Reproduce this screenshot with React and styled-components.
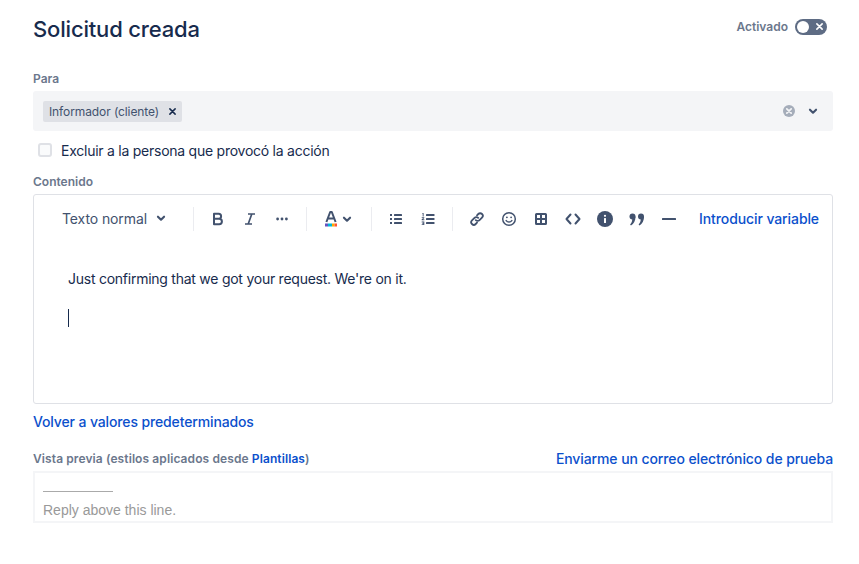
import React from 'react'
import styled, { createGlobalStyle } from 'styled-components'

const Global = createGlobalStyle`
  html, body {
    margin: 0;
    padding: 0;
    background: #fff;
    font-family: Inter, "Noto Sans", sans-serif;
    -webkit-font-smoothing: antialiased;
  }
`
const Page = styled.div`
  width: 800px;
  padding: 14px 26px 0 33px;
  display: flex;
  flex-direction: column;
`
const Header = styled.div`
  display: flex;
  align-items: center;
  justify-content: space-between;
  height: 30px;
  margin-bottom: 27px;
`
const Title = styled.h1`
  margin: 0;
  font-size: 22px;
  line-height: 30px;
  font-weight: 500;
  letter-spacing: -0.17px;
  color: #172b4d;
`
const ToggleWrap = styled.div`
  display: flex;
  align-items: center;
  gap: 7px;
  margin: -5px 6px 0 0;
`
const ToggleLabel = styled.span`
  font-size: 12px;
  font-weight: 600;
  color: #6b778c;
`
const ToggleTrack = styled.div`
  width: 32px;
  height: 16px;
  border-radius: 8px;
  background: #5e6c84;
  display: flex;
  align-items: center;
  justify-content: space-between;
  padding: 0 4px 0 2px;
  box-sizing: border-box;
`
const ToggleKnob = styled.div`
  width: 12px;
  height: 12px;
  border-radius: 50%;
  background: #fff;
`
const Label = styled.div`
  font-size: 12px;
  line-height: 16px;
  font-weight: 600;
  color: #6b778c;
  margin-bottom: ${p => p.$gap || 4}px;
`
const Select = styled.div`
  height: 40px;
  background: #f4f5f7;
  border-radius: 3px;
  display: flex;
  align-items: center;
  padding: 0 13px 0 10px;
`
const Tag = styled.div`
  height: 21px;
  display: flex;
  align-items: center;
  gap: 10px;
  padding: 0 6px;
  background: #dfe1e6;
  border-radius: 2px;
  font-size: 12px;
  letter-spacing: -0.1px;
  color: #42526e;
`
const SelectIcons = styled.div`
  margin-left: auto;
  display: flex;
  align-items: center;
  gap: 10px;
`
const CheckRow = styled.label`
  display: flex;
  align-items: center;
  gap: 9px;
  height: 20px;
  margin: 9px 0 14px 5px;
  font-size: 14px;
  letter-spacing: -0.25px;
  color: #172b4d;
`
const Checkbox = styled.span`
  width: 10px;
  height: 10px;
  border: 2px solid #dfe1e6;
  border-radius: 3px;
  background: #fafbfc;
`
const Editor = styled.div`
  height: 208px;
  border: 1px solid #dfe1e6;
  border-radius: 3px;
  display: flex;
  flex-direction: column;
`
const Toolbar = styled.div`
  height: 24px;
  margin-top: 12px;
  display: flex;
  align-items: center;
  padding: 0 13px 0 28px;
  color: #42526e;
`
const StyleMenu = styled.div`
  display: flex;
  align-items: center;
  gap: 7px;
  font-size: 14px;
  letter-spacing: -0.1px;
  color: #42526e;
  width: 131px;
  padding-bottom: 2px;
`
const Separator = styled.span`
  width: 1px;
  height: 24px;
  background: #ebecf0;
  flex: none;
`
const ToolGroup = styled.div`
  display: flex;
  align-items: center;
  gap: ${p => p.$gap || 16}px;
  padding: 0 ${p => p.$right ?? 16}px 0 ${p => p.$left ?? 16}px;
`
const ToolLink = styled.a`
  margin-left: auto;
  padding-bottom: 2px;
  font-size: 14px;
  font-weight: 500;
  color: #0b50cc;
  letter-spacing: -0.1px;
`
const Body = styled.div`
  padding: 36px 34px 0;
  font-size: 14px;
  line-height: 24px;
  letter-spacing: -0.25px;
  color: #172b4d;
`
const Paragraph = styled.p`
  margin: 0 0 14px;
`
const Caret = styled.span`
  display: block;
  width: 1px;
  height: 18px;
  margin-top: 18px;
  background: #172b4d;
`
const ResetLink = styled.a`
  margin: 8px 0 16px;
  font-size: 14px;
  line-height: 20px;
  font-weight: 500;
  letter-spacing: -0.13px;
  color: #0b50cc;
`
const PreviewHead = styled.div`
  display: flex;
  justify-content: space-between;
  align-items: center;
  height: 20px;
  margin-bottom: 3px;
`
const PreviewLabel = styled.div`
  font-size: 12px;
  font-weight: 600;
  letter-spacing: 0.1px;
  color: #6b778c;
`
const InlineLink = styled.a`
  color: #0b50cc;
`
const TestLink = styled.a`
  font-size: 14px;
  font-weight: 500;
  letter-spacing: -0.1px;
  color: #0b50cc;
`
const Preview = styled.div`
  height: 48px;
  border: 2px solid #f4f5f7;
  padding: 0 8px;
  font-family: "Liberation Sans", Arial, sans-serif;
  font-size: 14px;
  line-height: 20px;
  color: #999;
`
const Rule = styled.div`
  width: 70px;
  height: 1px;
  background: #aaa;
  margin: 18px 0 8px;
`

const Chevron = ({ size = 16, color = 'currentColor' }) => (
  <svg width={size} height={size} viewBox="0 0 16 16" fill="none">
    <path d="M4.5 6.500 8 10l3.500-3.500" stroke={color} strokeWidth="2.400" strokeLinecap="round" strokeLinejoin="round" />
  </svg>
)

const Cross = ({ color = '#fff', size = 8, w = 1.8 }) => (
  <svg width={size} height={size} viewBox="0 0 8 8" fill="none">
    <path d="M1 1l6 6M7 1 1 7" stroke={color} strokeWidth={w} strokeLinecap="round" />
  </svg>
)

const ClearIcon = () => (
  <svg width="14" height="14" viewBox="0 0 14 14">
    <circle cx="7" cy="7" r="6" fill="#a5adba" />
    <path d="M4.800 4.800l4.400 4.400M9.200 4.800 4.800 9.200" stroke="#f4f5f7" strokeWidth="1.700" strokeLinecap="round" />
  </svg>
)

const Svg = ({ children }) => (
  <svg width="16" height="16" viewBox="0 0 16 16" fill="none" stroke="#42526e" strokeWidth="1.700" strokeLinecap="round" strokeLinejoin="round">
    {children}
  </svg>
)

const Bold = () => (
  <Svg>
    <path strokeWidth="2" d="M4 2.800h4.600a2.500 2.500 0 0 1 0 5H4zM4 7.800h5.200a2.700 2.700 0 0 1 0 5.400H4z" />
  </Svg>
)
const Italic = () => (
  <Svg>
    <path strokeLinecap="butt" d="M6 3h7M3 13h7M9.800 3 6.200 13" />
  </Svg>
)
const More = () => (
  <svg width="16" height="16" viewBox="0 0 16 16" fill="#42526e">
    <circle cx="3.600" cy="8" r="1.400" /><circle cx="8" cy="8" r="1.400" /><circle cx="12.400" cy="8" r="1.400" />
  </svg>
)
const TextColor = () => (
  <svg width="16" height="18" viewBox="0 0 16 18" fill="none">
    <path d="M3.400 12 7.200 2h1.600l3.800 10M5 8.600h6" stroke="#42526e" strokeWidth="2" strokeLinejoin="round" />
    <rect x="2" y="13.500" width="3" height="3" fill="#6554c0" />
    <rect x="5" y="13.500" width="4" height="3" fill="#00b8d9" />
    <rect x="9" y="13.500" width="2.500" height="3" fill="#ffab00" />
    <rect x="11.500" y="13.500" width="2.500" height="3" fill="#ff5630" />
  </svg>
)
const Bullets = () => (
  <svg width="16" height="16" viewBox="0 0 16 16" fill="#42526e">
    <rect x="2" y="3" width="2" height="2" /><rect x="2" y="7" width="2" height="2" /><rect x="2" y="11" width="2" height="2" />
    <rect x="6" y="3" width="8" height="2" rx=".6" /><rect x="6" y="7" width="8" height="2" rx=".6" /><rect x="6" y="11" width="8" height="2" rx=".6" />
  </svg>
)
const Numbers = () => (
  <svg width="16" height="16" viewBox="0 0 16 16" fill="#42526e">
    <rect x="6" y="3" width="8.500" height="2" rx=".6" /><rect x="6" y="7" width="8.500" height="2" rx=".6" /><rect x="6" y="11" width="8.500" height="2" rx=".6" />
    <path d="M2.400 2h1.200v3.400H2.700V3h-.3zM1.700 6.200h2.600v.9L2.900 8.300h1.400v.9H1.700v-.9l1.500-1.200H1.700zM1.700 10.600h2.600v3.400H1.700v-.8h1.700v-.5H2.300v-.7h1.100v-.6H1.700z" />
  </svg>
)
const LinkIcon = () => (
  <Svg>
    <path strokeWidth="1.800" d="M6.800 9.200a2.600 2.600 0 0 0 3.700 0l2.500-2.500a2.600 2.600 0 0 0-3.700-3.700L8 4.300" />
    <path strokeWidth="1.800" d="M9.200 6.800a2.600 2.600 0 0 0-3.700 0L3 9.300A2.600 2.600 0 0 0 6.700 13l1.300-1.300" />
  </Svg>
)
const Smile = () => (
  <Svg>
    <circle cx="8" cy="8" r="6.300" strokeWidth="1.500" />
    <path strokeWidth="1.500" d="M5.200 9.600c.7 1 1.700 1.500 2.800 1.500s2.100-.5 2.800-1.500" />
    <circle cx="5.900" cy="6.300" r=".9" fill="#42526e" stroke="none" />
    <circle cx="10.100" cy="6.300" r=".9" fill="#42526e" stroke="none" />
  </Svg>
)
const Table = () => (
  <svg width="16" height="16" viewBox="0 0 16 16" fill="#42526e">
    <path fillRule="evenodd" d="M3.500 2h9A1.500 1.500 0 0 1 14 3.500v9a1.500 1.500 0 0 1-1.500 1.500h-9A1.500 1.500 0 0 1 2 12.500v-9A1.500 1.500 0 0 1 3.500 2zM4 4v3h3V4zm5 0v3h3V4zM4 9v3h3V9zm5 0v3h3V9z" />
  </svg>
)
const Code = () => (
  <Svg>
    <path strokeWidth="2" d="M5.500 3.500 1.500 8l4 4.500M10.500 3.500l4 4.500-4 4.500" />
  </Svg>
)
const Info = () => (
  <svg width="16" height="16" viewBox="0 0 16 16">
    <circle cx="8" cy="8" r="8" fill="#42526e" />
    <rect x="7" y="7" width="2" height="5" rx=".5" fill="#fff" />
    <circle cx="8" cy="4.800" r="1.100" fill="#fff" />
  </svg>
)
const Quote = () => (
  <svg width="16" height="16" viewBox="0 0 16 16" fill="#42526e">
    <circle cx="3.500" cy="5.500" r="3" /><circle cx="12" cy="5.500" r="3" />
    <path d="M6.500 5.500c0 4-1.700 7.500-4.500 9l-.9-1.100c1.500-1.300 2.200-3.400 2.200-5.900zM15 5.500c0 4-1.700 7.500-4.500 9l-.9-1.100c1.500-1.300 2.200-3.400 2.200-5.900z" />
  </svg>
)
const Divider = () => (
  <svg width="16" height="16" viewBox="0 0 16 16">
    <rect x="1" y="7" width="14" height="2" rx=".5" fill="#42526e" />
  </svg>
)

export default function App() {
  return (
    <Page>
      <Global />
      <Header>
        <Title>Solicitud creada</Title>
        <ToggleWrap>
          <ToggleLabel>Activado</ToggleLabel>
          <ToggleTrack>
            <ToggleKnob />
            <Cross size={7} />
          </ToggleTrack>
        </ToggleWrap>
      </Header>
      <Label>Para</Label>
      <Select>
        <Tag>
          Informador (cliente)
          <Cross color="#172b4d" size={7} w={1.7} />
        </Tag>
        <SelectIcons>
          <ClearIcon />
          <Chevron size={14} color="#42526e" />
        </SelectIcons>
      </Select>
      <CheckRow>
        <Checkbox />
        Excluir a la persona que provocó la acción
      </CheckRow>
      <Label>Contenido</Label>
      <Editor>
        <Toolbar>
          <StyleMenu>
            Texto normal
            <Chevron size={14} />
          </StyleMenu>
          <Separator />
          <ToolGroup>
            <Bold />
            <Italic />
            <More />
          </ToolGroup>
          <Separator />
          <ToolGroup $gap={1} $right={17}>
            <TextColor />
            <Chevron size={14} />
          </ToolGroup>
          <Separator />
          <ToolGroup>
            <Bullets />
            <Numbers />
          </ToolGroup>
          <Separator />
          <ToolGroup $right={0}>
            <LinkIcon />
            <Smile />
            <Table />
            <Code />
            <Info />
            <Quote />
            <Divider />
          </ToolGroup>
          <ToolLink>Introducir variable</ToolLink>
        </Toolbar>
        <Body>
          <Paragraph>Just confirming that we got your request. We're on it.</Paragraph>
          <Caret />
        </Body>
      </Editor>
      <ResetLink>Volver a valores predeterminados</ResetLink>
      <PreviewHead>
        <PreviewLabel>
          Vista previa (estilos aplicados desde <InlineLink>Plantillas</InlineLink>)
        </PreviewLabel>
        <TestLink>Enviarme un correo electrónico de prueba</TestLink>
      </PreviewHead>
      <Preview>
        <Rule />
        Reply above this line.
      </Preview>
    </Page>
  )
}
